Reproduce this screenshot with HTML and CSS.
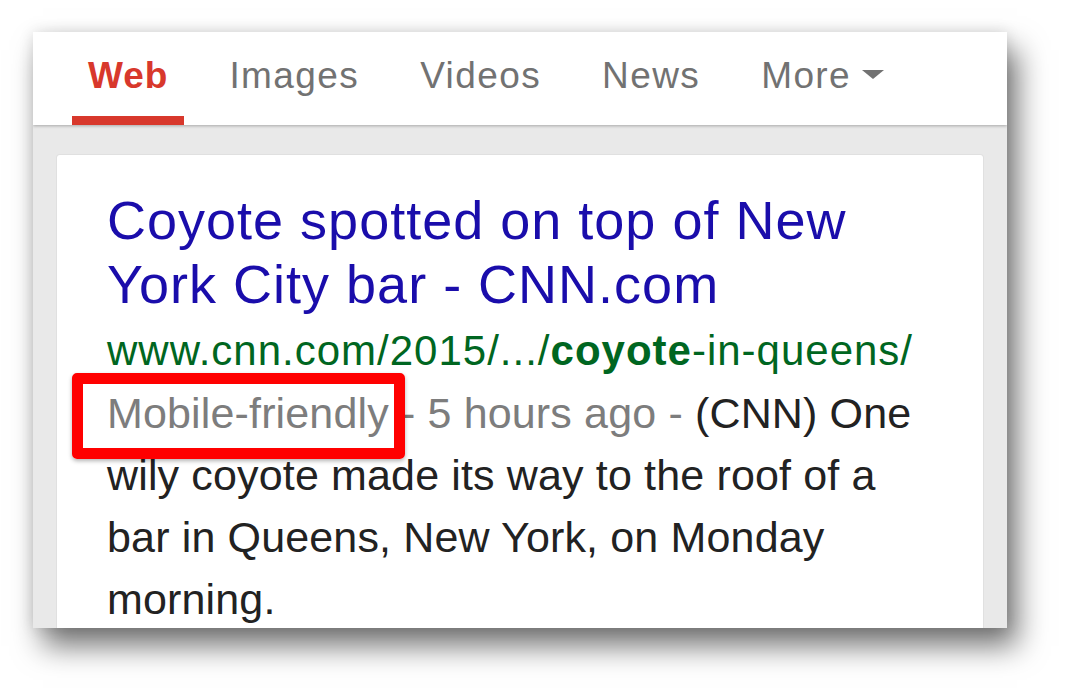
FILE: index.html
```html
<!DOCTYPE html>
<html>
<head>
<meta charset="utf-8">
<link rel="stylesheet" href="styles.css">
</head>
<body>
<div class="stage">
  <div class="frame">
    <nav class="tabs">
      <div class="tab active">Web</div>
      <div class="tab">Images</div>
      <div class="tab">Videos</div>
      <div class="tab">News</div>
      <div class="tab more">More<span class="caret"></span></div>
    </nav>
    <main class="results">
      <article class="card">
        <h1 class="title">Coyote spotted on top of New York City bar - CNN.com</h1>
        <div class="url">www.cnn.com/2015/.../<b>coyote</b>-in-queens/</div>
        <p class="snippet"><span class="meta">Mobile-friendly - 5 hours ago - </span>(CNN) One wily coyote made its way to the roof of a bar in Queens, New York, on Monday morning.</p>
        <div class="highlight"></div>
      </article>
    </main>
  </div>
</div>
</body>
</html>
```

FILE: styles.css
```css
html, body {
  margin: 0;
  padding: 0;
  background: #ffffff;
}
body {
  width: 1072px;
  height: 694px;
  overflow: hidden;
  font-family: "Liberation Sans", Arial, Helvetica, sans-serif;
}
.stage {
  padding: 32px 0 0 33px;
}
.frame {
  width: 974px;
  height: 596px;
  overflow: hidden;
  background: #e9e9e9;
  box-shadow: 10px 18px 28px rgba(0, 0, 0, 0.55), 0 0 14px rgba(0, 0, 0, 0.12);
  display: flex;
  flex-direction: column;
}
.tabs {
  height: 93px;
  flex: none;
  background: #ffffff;
  display: flex;
  align-items: stretch;
  gap: 29px;
  padding-left: 39px;
  box-shadow: 0 1px 3px rgba(0, 0, 0, 0.28);
  position: relative;
  z-index: 1;
}
.tab {
  padding: 23px 16px 0;
  font-size: 37px;
  letter-spacing: 1.4px;
  line-height: 42px;
  color: #727272;
  box-sizing: border-box;
  height: 93px;
  border-bottom: 9px solid transparent;
}
.tab.active {
  color: #d8382c;
  font-weight: bold;
  letter-spacing: 1px;
  border-bottom-color: #d8382c;
}
.more {
  display: flex;
  align-items: flex-start;
}
.caret {
  display: block;
  width: 0;
  height: 0;
  margin: 15px 0 0 11px;
  border-left: 11px solid transparent;
  border-right: 11px solid transparent;
  border-top: 9px solid #727272;
}
.results {
  flex: 1;
  padding: 30px 24px 0;
}
.card {
  position: relative;
  background: #ffffff;
  border-radius: 3px;
  box-shadow: 0 0 0 1px #e0e0e0;
  padding: 33px 56px 40px 50px;
  min-height: 500px;
}
.title {
  margin: 0;
  font-weight: normal;
  font-size: 54px;
  letter-spacing: 1px;
  line-height: 64px;
  color: #1a0dab;
}
.url {
  margin-top: 4px;
  font-size: 42px;
  letter-spacing: 1px;
  line-height: 62px;
  color: #006621;
  white-space: nowrap;
}
.url b {
  font-weight: bold;
}
.snippet {
  margin: 0;
  font-size: 43px;
  letter-spacing: 0.15px;
  line-height: 62px;
  color: #222222;
}
.meta {
  color: #7d7d7d;
}
.highlight {
  position: absolute;
  left: 15px;
  top: 218px;
  width: 333px;
  height: 86px;
  box-sizing: border-box;
  border: 11px solid #ff0000;
  border-radius: 5px;
  box-shadow: 0 2px 4px rgba(0, 0, 0, 0.3);
}
```
